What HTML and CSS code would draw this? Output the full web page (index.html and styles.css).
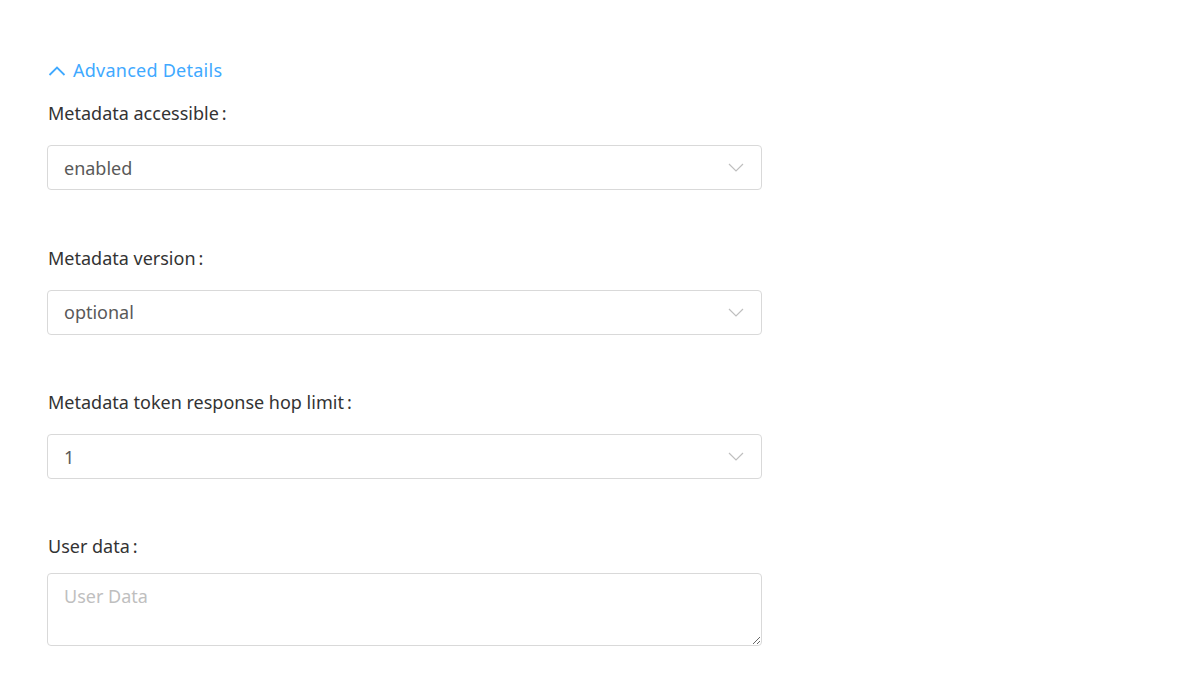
FILE: index.html
```html
<!DOCTYPE html>
<html>
<head>
<meta charset="utf-8">
<link rel="stylesheet" href="styles.css">
</head>
<body>
<div class="form">
  <a class="toggle">
    <svg class="toggle-icon" width="18" height="10" viewBox="0 0 18 10"><path d="M1.5 9 L9 1.5 L16.5 9" fill="none" stroke="#40a9ff" stroke-width="1.8"/></svg>
    <span>Advanced Details</span>
  </a>
  <div class="item">
    <div class="label">Metadata accessible<span class="colon">:</span></div>
    <div class="select"><span class="value">enabled</span><svg class="arrow" width="16" height="9" viewBox="0 0 16 9"><path d="M1 1 L8 8 L15 1" fill="none" stroke="#bfbfbf" stroke-width="1.2"/></svg></div>
  </div>
  <div class="item">
    <div class="label">Metadata version<span class="colon">:</span></div>
    <div class="select"><span class="value">optional</span><svg class="arrow" width="16" height="9" viewBox="0 0 16 9"><path d="M1 1 L8 8 L15 1" fill="none" stroke="#bfbfbf" stroke-width="1.2"/></svg></div>
  </div>
  <div class="item">
    <div class="label">Metadata token response hop limit<span class="colon">:</span></div>
    <div class="select"><span class="value">1</span><svg class="arrow" width="16" height="9" viewBox="0 0 16 9"><path d="M1 1 L8 8 L15 1" fill="none" stroke="#bfbfbf" stroke-width="1.2"/></svg></div>
  </div>
  <div class="item last">
    <div class="label">User data<span class="colon">:</span></div>
    <textarea class="textarea" placeholder="User Data"></textarea>
  </div>
</div>
</body>
</html>
```
FILE: styles.css
```css
html, body {
  margin: 0;
  padding: 0;
  background: #ffffff;
}
body {
  font-family: "Noto Sans", "Open Sans", sans-serif;
  font-size: 17px;
  color: #262626;
}
.form {
  width: 715px;
  padding: 58px 0 0 47px;
}
.toggle {
  display: flex;
  align-items: center;
  gap: 7px;
  height: 24px;
  line-height: 24px;
  color: #40a9ff;
  font-size: 18px;
  letter-spacing: 0.25px;
  margin-left: 1px;
}
.toggle-icon {
  display: block;
  margin-top: 2px;
}
.item {
  margin-top: 19px;
}
.item + .item {
  margin-top: 55.5px;
}
.item + .item.last {
  margin-top: 54.5px;
}
.label {
  height: 24px;
  line-height: 24px;
  font-size: 18px;
  margin-left: 1px;
  color: #333333;
}
.colon {
  margin-left: 3px;
}
.select {
  margin-top: 20px;
  height: 45px;
  box-sizing: border-box;
  border: 1px solid #d9d9d9;
  border-radius: 4px;
  display: flex;
  align-items: center;
  justify-content: space-between;
  padding: 0 17px 0 16px;
}
.value {
  color: #595959;
  font-size: 18px;
}
.arrow {
  display: block;
}
.item.last .label {
  margin-bottom: 15px;
}
.textarea {
  display: block;
  width: 715px;
  height: 73px;
  box-sizing: border-box;
  border: 1px solid #d9d9d9;
  border-radius: 4px;
  padding: 10px 16px;
  font-family: "Noto Sans", "Open Sans", sans-serif;
  font-size: 18px;
  color: #595959;
  resize: vertical;
  outline: none;
}
.textarea::placeholder {
  color: #bfbfbf;
}
```
